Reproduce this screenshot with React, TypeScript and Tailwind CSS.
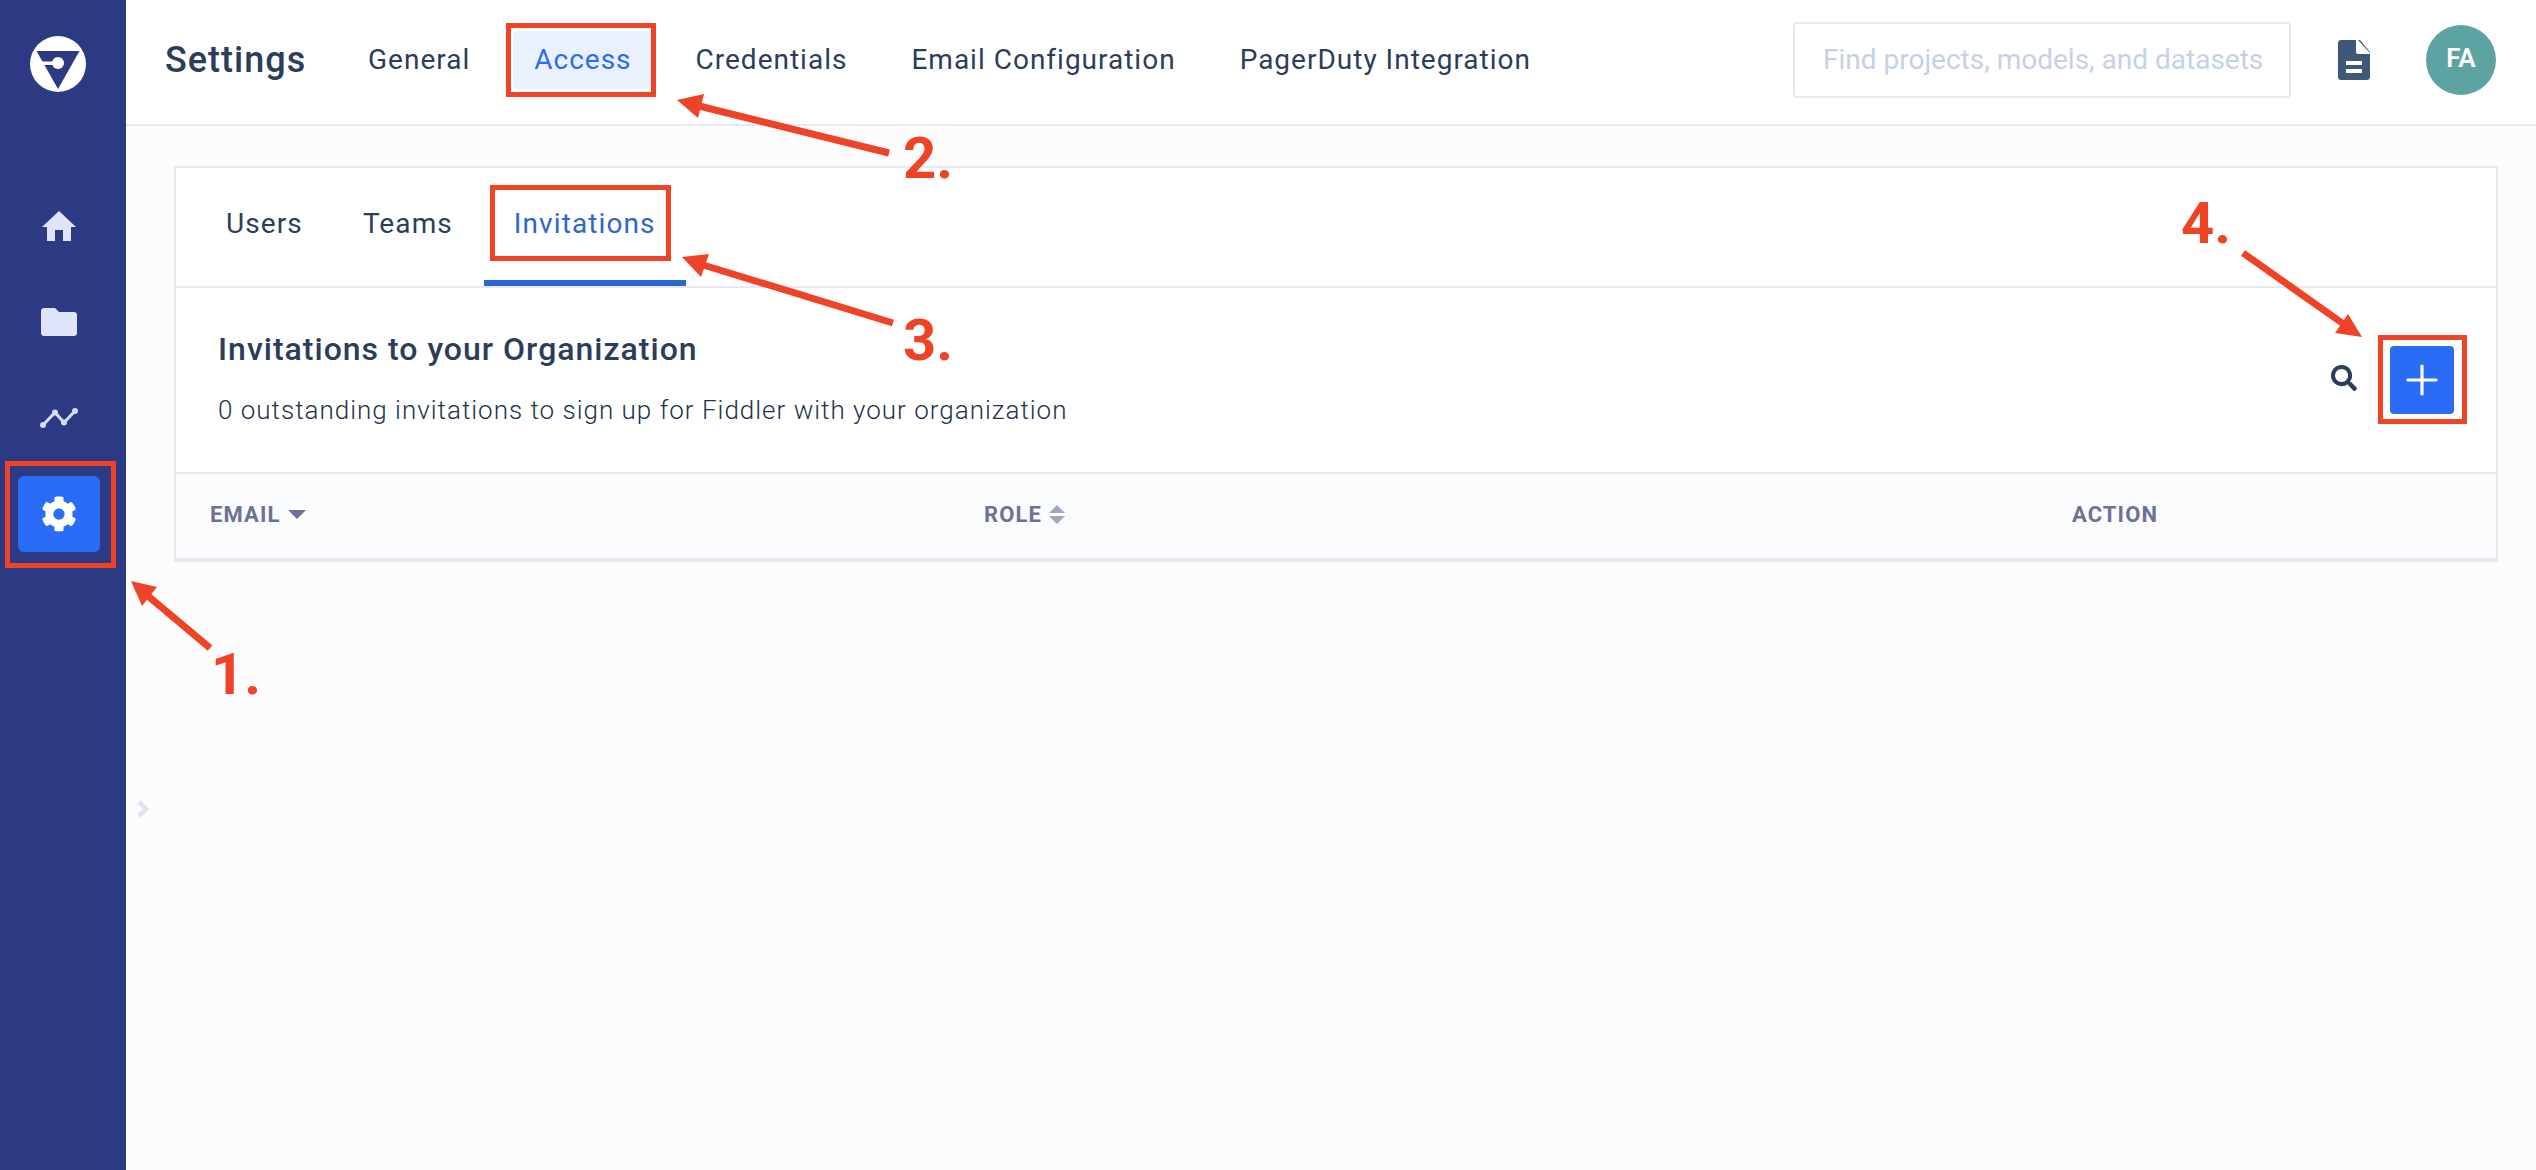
import { Plus } from "lucide-react";
import { FaSearch } from "react-icons/fa";

const topTabs = ["General", "Access", "Credentials", "Email Configuration", "PagerDuty Integration"];

function Logo() {
  return (
    <svg width="56" height="56" viewBox="0 0 56 56">
      <circle cx="28" cy="28" r="28" fill="#fff" />
      <path d="M6.5 15H49.5L28 53Z" fill="#2c3a84" />
      <path d="M10 25.5H28V29H14Z" fill="#fff" />
      <circle cx="28" cy="27" r="6" fill="#fff" />
    </svg>
  );
}

function HomeIcon() {
  return (
    <svg width="36" height="32" viewBox="0 0 36 32" fill="#e0e4fb">
      <path d="M18 1 35 17H30V31H22V20H14V31H6V17H1Z" />
    </svg>
  );
}

function FolderIcon() {
  return (
    <svg width="36" height="28" viewBox="0 0 36 28" fill="#e0e4fb">
      <path d="M3 0H14L18 4H33C34.7 4 36 5.3 36 7V25C36 26.7 34.7 28 33 28H3C1.3 28 0 26.7 0 25V3C0 1.3 1.3 0 3 0Z" />
    </svg>
  );
}

function ChartIcon() {
  return (
    <svg width="38" height="20" viewBox="0 0 38 20" fill="#d5dbf5">
      <path d="M3 17 15 4.5 24 14.5 35 3" fill="none" stroke="#d5dbf5" strokeWidth="3" />
      <circle cx="3" cy="17" r="3" />
      <circle cx="15" cy="4.5" r="3" />
      <circle cx="24" cy="14.5" r="3" />
      <circle cx="35" cy="3" r="3" />
    </svg>
  );
}

function GearIcon() {
  return (
    <svg width="36" height="36" viewBox="0 0 512 512" fill="#fff">
      <path d="M487.4 315.7l-42.6-24.6c4.3-23.2 4.3-47 0-70.2l42.6-24.6c4.9-2.8 7.1-8.6 5.5-14-11.1-35.6-30-67.8-54.7-94.6-3.8-4.1-10-5.1-14.8-2.3L380.8 110c-17.9-15.4-38.5-27.3-60.8-35.1V25.8c0-5.6-3.9-10.5-9.4-11.7-36.7-8.2-74.3-7.8-109.2 0-5.5 1.2-9.4 6.1-9.4 11.7V75c-22.2 7.9-42.8 19.8-60.8 35.1L88.7 85.5c-4.9-2.8-11-1.9-14.8 2.3-24.7 26.7-43.6 58.9-54.7 94.6-1.7 5.4.6 11.2 5.5 14L67.3 221c-4.3 23.2-4.3 47 0 70.2l-42.6 24.6c-4.9 2.8-7.1 8.6-5.5 14 11.1 35.6 30 67.8 54.7 94.6 3.8 4.1 10 5.1 14.8 2.3l42.6-24.6c17.9 15.4 38.5 27.3 60.8 35.1v49.2c0 5.6 3.9 10.5 9.4 11.7 36.7 8.2 74.3 7.8 109.2 0 5.5-1.2 9.4-6.1 9.4-11.7v-49.2c22.2-7.9 42.8-19.8 60.8-35.1l42.6 24.6c4.9 2.8 11 1.9 14.8-2.3 24.7-26.7 43.6-58.9 54.7-94.6 1.5-5.5-.7-11.3-5.6-14.1zM256 336c-44.1 0-80-35.9-80-80s35.9-80 80-80 80 35.9 80 80-35.9 80-80 80z" />
    </svg>
  );
}

function DocIcon() {
  return (
    <svg width="32" height="40" viewBox="0 0 32 40">
      <path d="M3 0H18V12C18 13 19 14 20 14H32V37C32 38.7 30.7 40 29 40H3C1.3 40 0 38.7 0 37V3C0 1.3 1.3 0 3 0Z" fill="#3f5878" />
      <path d="M20 0 32 13V12L22 0Z" fill="#3f5878" />
      <path d="M8 21H24V25H8ZM8 29H24V33H8Z" fill="#fff" />
    </svg>
  );
}

function Arrow({ d, head }: { d: string; head: string }) {
  return (
    <>
      <path d={d} stroke="#ee4326" strokeWidth="7" fill="none" />
      <polygon points={head} fill="#ee4326" />
    </>
  );
}

export default function App() {
  return (
    <div className="relative flex h-[1170px] w-[2536px] overflow-hidden bg-[#fcfcfd] font-['Roboto',sans-serif] text-[#2c3d5b]">
      <aside className="flex w-[126px] shrink-0 flex-col bg-[#2c3a84] pl-[18px] pt-[36px]">
        <div className="ml-[12px]"><Logo /></div>
        <nav className="mt-[96px] flex flex-col gap-[20px]">
          <div className="flex h-[76px] w-[82px] items-center justify-center"><HomeIcon /></div>
          <div className="flex h-[76px] w-[82px] items-center justify-center"><FolderIcon /></div>
          <div className="flex h-[76px] w-[82px] items-center justify-center"><ChartIcon /></div>
          <div className="flex h-[76px] w-[82px] items-center justify-center rounded-md bg-[#2b6cf6]"><GearIcon /></div>
        </nav>
      </aside>

      <div className="flex min-w-0 flex-1 flex-col">
        <header className="flex h-[126px] shrink-0 items-center border-b-2 border-[#e6e9f4] bg-white pb-[5px] pl-[39px]">
          <h1 className="w-[182px] text-[36px] font-medium tracking-[1px]">Settings</h1>
          <div className="flex gap-[22px]">
            {topTabs.map((t) => (
              <div
                key={t}
                className={
                  t === "Access"
                    ? "flex h-[58px] items-center rounded bg-[#eaf0fc] px-[21px] text-[28px] tracking-[1px] text-[#2b6cf6]"
                    : "flex h-[58px] items-center px-[21px] text-[28px] tracking-[1px]"
                }
              >
                {t}
              </div>
            ))}
          </div>
          <div className="ml-auto flex items-center">
            <div className="flex h-[76px] w-[498px] items-center rounded border-2 border-[#e6e9f4] pl-[28px] text-[28px] text-[#c5d1e6]">
              Find projects, models, and datasets
            </div>
            <div className="ml-[47px]"><DocIcon /></div>
            <div className="ml-[56px] mr-[40px] flex h-[70px] w-[70px] items-center justify-center rounded-full bg-[#5ca3a2] pb-[2px] text-[26px] font-semibold text-white">
              FA
            </div>
          </div>
        </header>

        <main className="pl-[48px] pt-[40px]">
          <section className="w-[2324px] border-2 border-b-4 border-[#e6e9f4] bg-white">
            <div className="flex h-[120px] border-b-2 border-[#e6e9f4] pl-[20px]">
              <div className="flex items-center px-[30px] pb-[7px] text-[28px] tracking-[1.1px]">Users</div>
              <div className="flex items-center px-[30px] pb-[7px] text-[28px] tracking-[1.1px]">Teams</div>
              <div className="ml-[1px] flex items-center border-b-[6px] border-[#2c66cf] px-[30px] pb-[1px] text-[28px] tracking-[1.1px] text-[#2c66cf]">Invitations</div>
            </div>
            <div className="flex h-[184px] items-center justify-between pl-[42px] pr-[42px]">
              <div className="flex flex-col gap-[18px] pb-[6px]">
                <h2 className="text-[32px] font-medium tracking-[1px]">Invitations to your Organization</h2>
                <p className="text-[26px] font-light tracking-[1px] text-[#22324f]">0 outstanding invitations to sign up for Fiddler with your organization</p>
              </div>
              <div className="flex items-center gap-[33px]">
                <FaSearch size={26} className="mb-[4px]" />
                <button className="flex h-[68px] w-[64px] items-center justify-center rounded bg-[#2b6cf6] text-white">
                  <Plus size={48} strokeWidth={1.6} />
                </button>
              </div>
            </div>
            <div className="flex h-[86px] items-center border-t-2 border-[#e6e9f4] bg-[#fafbfd] pb-[3px] pl-[34px] text-[22px] font-bold tracking-[1.1px] text-[#6c7293]">
              <div className="flex w-[774px] items-center gap-[8px]">
                EMAIL
                <svg width="18" height="9" viewBox="0 0 18 9" fill="#6c7293"><path d="M0 0H18L9 9Z" /></svg>
              </div>
              <div className="flex w-[1088px] items-center gap-[7px]">
                ROLE
                <svg width="16" height="19" viewBox="0 0 16 19" fill="#a0a6bf"><path d="M8 0 16 8H0ZM0 11H16L8 19Z" /></svg>
              </div>
              <div>ACTION</div>
            </div>
          </section>
        </main>
      </div>

      {/* annotation layer drawn over the screenshot */}
      <svg className="absolute left-[137px] top-[800px]" width="12" height="18" viewBox="0 0 12 18" fill="none" stroke="#dde3ee" strokeWidth="4.5">
        <path d="M2 2 9 9 2 16" />
      </svg>
      <div className="absolute left-[5px] top-[461px] h-[107px] w-[111px] border-[5px] border-[#ee4326]" />
      <div className="absolute left-[506px] top-[23px] h-[74px] w-[150px] border-[5px] border-[#ee4326]" />
      <div className="absolute left-[490px] top-[185px] h-[76px] w-[181px] border-[5px] border-[#ee4326]" />
      <div className="absolute left-[2378px] top-[335px] h-[89px] w-[89px] border-[5px] border-[#ee4326]" />
      <svg className="pointer-events-none absolute inset-0" width="2536" height="1170">
        <Arrow d="M210 648 148 596" head="131,581 157,587 142,606" />
        <Arrow d="M889 153 695 105" head="677,100 704,94 698,118" />
        <Arrow d="M893 323 700 264" head="682,257 709,254 701,277" />
        <Arrow d="M2243 253 2345 325" head="2362,337 2348,314 2335,333" />
      </svg>
      <span className="absolute left-[211px] top-[640px] text-[58px] leading-[68px] font-bold text-[#ee4326]">1.</span>
      <span className="absolute left-[903px] top-[124px] text-[58px] leading-[68px] font-bold text-[#ee4326]">2.</span>
      <span className="absolute left-[903px] top-[306px] text-[58px] leading-[68px] font-bold text-[#ee4326]">3.</span>
      <span className="absolute left-[2181px] top-[189px] text-[58px] leading-[68px] font-bold text-[#ee4326]">4.</span>
    </div>
  );
}
